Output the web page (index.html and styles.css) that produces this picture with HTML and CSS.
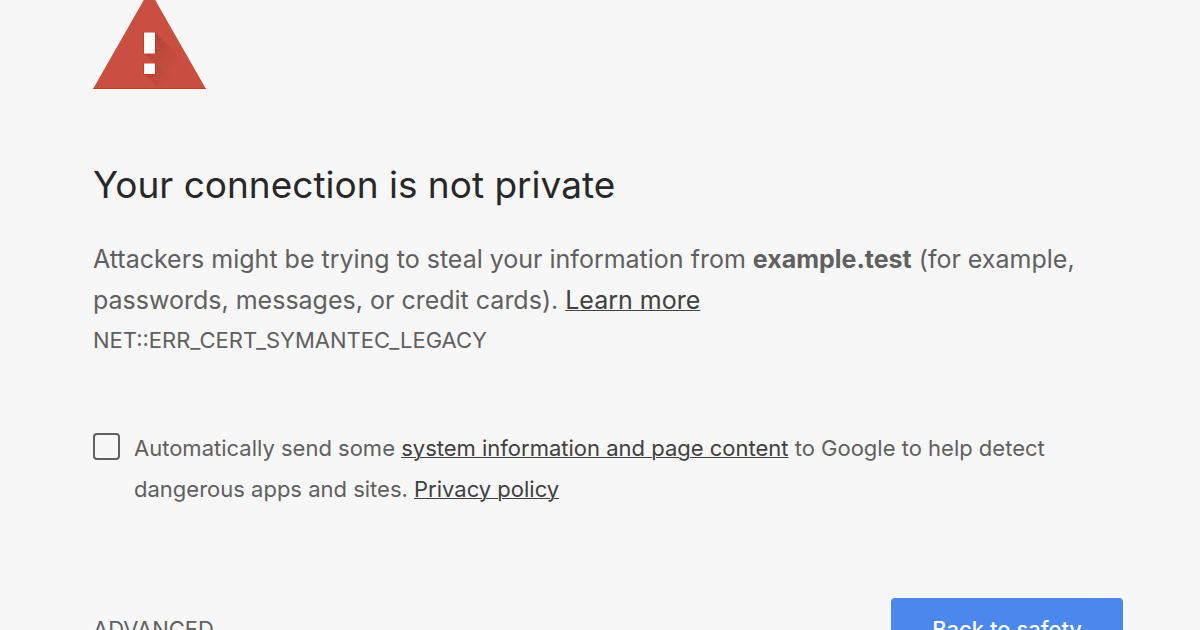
FILE: index.html
```html
<!DOCTYPE html>
<html lang="en">
<head>
    <meta charset="UTF-8">
    <title>Privacy error</title>
    <link rel="stylesheet" href="styles.css">
</head>
<body>
    <main class="interstitial">
        <svg class="warning-icon" viewBox="0 0 113 99" aria-hidden="true">
            <defs>
                <clipPath id="triangle">
                    <path d="M56.5 0L113 99H0z"/>
                </clipPath>
                <linearGradient id="bar-shadow" gradientUnits="userSpaceOnUse" x1="56" y1="52" x2="84" y2="80">
                    <stop offset="0" stop-color="#9c382e" stop-opacity="0.55"/>
                    <stop offset="1" stop-color="#b5483c" stop-opacity="0.1"/>
                </linearGradient>
                <linearGradient id="dot-shadow" gradientUnits="userSpaceOnUse" x1="56" y1="78" x2="74" y2="96">
                    <stop offset="0" stop-color="#9c382e" stop-opacity="0.55"/>
                    <stop offset="1" stop-color="#b5483c" stop-opacity="0.1"/>
                </linearGradient>
            </defs>
            <path fill="#cb4f40" d="M56.5 0L113 99H0z"/>
            <g clip-path="url(#triangle)">
                <path fill="url(#bar-shadow)" d="M62 42L119 99H88L51 63z"/>
                <path fill="url(#dot-shadow)" d="M62 73L88 99H66L51 84z"/>
            </g>
            <path fill="#c93a25" d="M50 42h13v22H50zM50 73h13v12H50zM1 98h111l1 1H0z"/>
            <path fill="#fff" d="M51 42.500h11v21H51zM51 73.500h11v10.500H51z"/>
        </svg>

        <h1>Your connection is not private</h1>
        <p class="message">Attackers might be trying to steal your information from <strong>example.test</strong> (for example, passwords, messages, or credit cards). <a href="#">Learn more</a></p>
        <div class="error-code">NET::ERR_CERT_SYMANTEC_LEGACY</div>

        <div class="opt-in">
            <input type="checkbox" id="opt-in-checkbox">
            <label for="opt-in-checkbox">Automatically send some <a href="#">system information and page content</a> to Google to help detect dangerous apps and sites. <a href="#">Privacy policy</a></label>
        </div>

        <div class="buttons">
            <button class="details-button">ADVANCED</button>
            <button class="primary-button">Back to safety</button>
        </div>
    </main>
</body>
</html>
```
FILE: styles.css
```css
body {
    margin: 0;
    background-color: #f7f7f7;
    color: #606060;
    font-family: Inter, Roboto, sans-serif;
    overflow: hidden;
}
.interstitial {
    box-sizing: border-box;
    max-width: 1200px;
    margin: -10px auto 0;
    padding: 0 77px 0 93px;
}
.warning-icon {
    display: block;
    width: 113px;
    height: 99px;
}
h1 {
    margin: 71px 0 29px;
    color: #282828;
    font-size: 37px;
    font-weight: 400;
    line-height: 50px;
}
.message {
    margin: 0;
    font-size: 25px;
    line-height: 41px;
}
strong {
    font-weight: 700;
}
a {
    color: #404040;
    text-decoration: underline;
    text-decoration-thickness: 1px;
}
.error-code {
    font-size: 22px;
    line-height: 38px;
}
.opt-in {
    display: flex;
    gap: 14px;
    margin-top: 69px;
    font-size: 22px;
    line-height: 41px;
}
.opt-in input {
    appearance: none;
    box-sizing: border-box;
    flex: none;
    width: 27px;
    height: 27px;
    margin: 5px 0 0;
    border: 2px solid #606060;
    border-radius: 4px;
}
.opt-in input:checked {
    background-color: #4c87ee;
}
.buttons {
    display: flex;
    justify-content: space-between;
    margin-top: 88px;
}
button {
    border: none;
    padding: 0;
    font-family: inherit;
    font-size: 22px;
    line-height: 62px;
    cursor: pointer;
}
.details-button {
    background: none;
    color: #606060;
}
.primary-button {
    padding: 0 41px;
    border-radius: 4px;
    background-color: #4c87ee;
    color: #fff;
    font-weight: 500;
}
```
